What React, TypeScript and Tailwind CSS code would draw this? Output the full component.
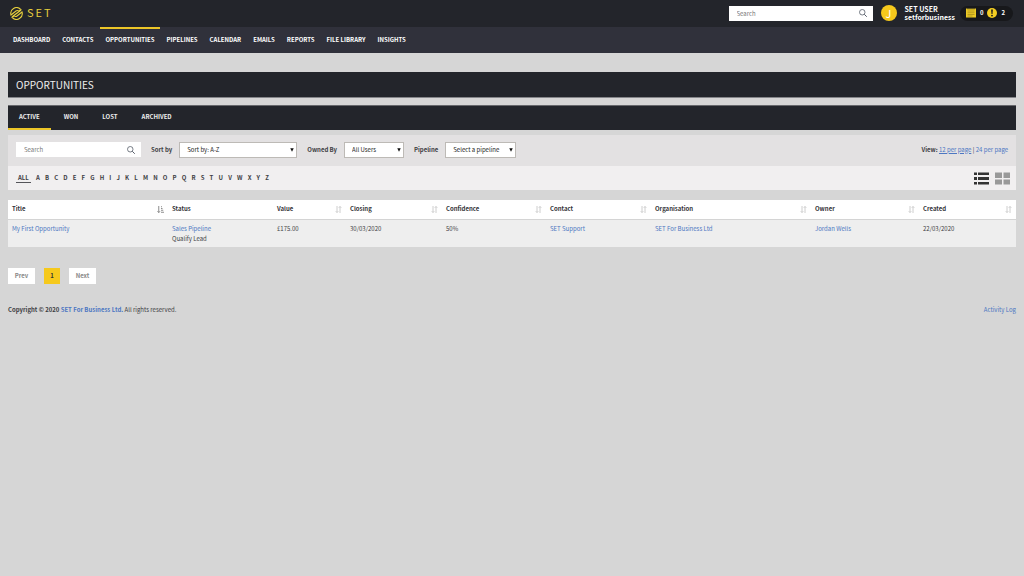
import type { ReactNode } from 'react';
import clsx from 'clsx';

const navItems = [
    'Dashboard',
    'Contacts',
    'Opportunities',
    'Pipelines',
    'Calendar',
    'Emails',
    'Reports',
    'File Library',
    'Insights',
];

const tabs = ['Active', 'Won', 'Lost', 'Archived'];

const letters = 'ABCDEFGHIJKLMNOPQRSTUVWXYZ'.split('');

const columns = [
    { label: 'Title', width: 'w-[160px]', sort: 'active' },
    { label: 'Status', width: 'w-[105px]', sort: 'none' },
    { label: 'Value', width: 'w-[73px]', sort: 'idle' },
    { label: 'Closing', width: 'w-[96px]', sort: 'idle' },
    { label: 'Confidence', width: 'w-[104px]', sort: 'idle' },
    { label: 'Contact', width: 'w-[105px]', sort: 'idle' },
    { label: 'Organisation', width: 'w-[160px]', sort: 'idle' },
    { label: 'Owner', width: 'w-[108px]', sort: 'idle' },
    { label: 'Created', width: 'w-[97px]', sort: 'idle' },
];

function Logo() {
    return (
        <a href="#home" aria-label="SET home" className="flex items-center gap-1 pb-px text-[#e6cf3c]">
            <svg viewBox="0 0 26 26" className="mt-px h-[13px] w-[13px]" fill="none" stroke="currentColor" strokeWidth="2.2">
                <path d="M21 4.500A11.500 11.500 0 0 0 2 16L12 8Q14 6.500 16 7.500Q17.500 8.500 19 7.500L23 5" />
                <path d="M5 21.500A11.500 11.500 0 0 0 24 10L14 18Q12 19.500 10 18.500Q8.500 17.500 7 18.500L3 21" />
                <path d="M4.500 19.500L13.500 12.500M12.500 13.500L21.500 6.500" />
            </svg>
            <span className="text-[11px] leading-[11px] tracking-[2px]">SET</span>
        </a>
    );
}

function SearchIcon() {
    return (
        <svg viewBox="0 0 16 16" className="h-2 w-2" fill="none" stroke="#555d68" strokeWidth="1.600">
            <circle cx="6.500" cy="6.500" r="5.500" />
            <path d="M10.500 10.500L15.500 15.500" strokeWidth="2" />
        </svg>
    );
}

function SearchBox({ label, className }: { label: string; className: string }) {
    return (
        <form role="search" className={clsx('flex items-center bg-white pr-[6px] pl-2', className)}>
            <input
                type="text"
                aria-label={label}
                placeholder="Search"
                className="h-[15px] min-w-0 flex-1 bg-transparent text-[6px] leading-[15px] outline-none placeholder:leading-[15px] placeholder:text-[#777777]"
            />
            <button type="button" aria-label="Search">
                <SearchIcon />
            </button>
        </form>
    );
}

function SelectField({ id, label, value, className }: { id: string; label: string; value: string; className: string }) {
    return (
        <div className="flex items-center gap-[7px]">
            <label htmlFor={id} className="font-bold">{label}</label>
            <div className={clsx('relative', className)}>
                <select
                    id={id}
                    className="block h-4 w-full appearance-none border border-[#bdbab6] bg-white pr-3 pl-[7px] text-[6px] leading-[10px] text-[#222222]"
                >
                    <option>{value}</option>
                </select>
                <svg viewBox="0 0 8 8" className="pointer-events-none absolute top-[6px] right-[3px] h-1 w-1" fill="#111111">
                    <path d="M0.500 0.500H7.500L4 7.500Z" />
                </svg>
            </div>
        </div>
    );
}

function SortIcon({ active }: { active: boolean }) {
    if (active) {
        return (
            <svg viewBox="0 0 14 14" className="h-[7px] w-[7px]" fill="none" stroke="#666666" strokeWidth="1.500">
                <path d="M3.500 0V13M1 10.500L3.500 13L6 10.500M8 1.500H10M8 5H11M8 8.500H12.500M8 12.500H14" />
            </svg>
        );
    }
    return (
        <svg viewBox="0 0 14 14" className="h-[7px] w-[7px]" fill="none" stroke="#bdbdbd" strokeWidth="1.500">
            <path d="M4 0V13M1.500 10.500L4 13L6.500 10.500M10 14V1M7.500 3.500L10 1L12.500 3.500" />
        </svg>
    );
}

function Link({ children }: { children: ReactNode }) {
    return <a href="#record" className="text-[#4d77c2]">{children}</a>;
}

function Header() {
    return (
        <header>
            <div className="flex h-[27px] items-center justify-between bg-[#23252b] pr-[11px] pb-px pl-[10px]">
                <Logo />
                <div className="flex items-center">
                    <SearchBox label="Search everything" className="w-36" />
                    <div className="ml-2 flex h-4 w-4 items-center justify-center rounded-full bg-[#f6c91c] text-[11px] leading-[14px] text-white">
                        J
                    </div>
                    <div className="ml-2 pb-px text-[7px] leading-2 font-bold text-white">
                        <p>SET USER</p>
                        <p>setforbusiness</p>
                    </div>
                    <div className="ml-[5px] flex h-[15px] items-center gap-1 rounded-full bg-[#17181b] pr-2 pl-[6px] text-[6px] leading-[10px] font-bold text-white">
                        <button type="button" aria-label="Tasks">
                            <svg viewBox="0 0 20 20" className="h-[10px] w-[10px]">
                                <path d="M0 1H20V19H0Z" fill="#edca25" />
                                <path d="M3 6H17M3 9.500H17M3 13H17M3 16H13" stroke="#9b8418" strokeWidth="1.300" />
                                <path d="M4 0V3M8 0V3M12 0V3M16 0V3" stroke="#17181b" strokeWidth="1.300" />
                            </svg>
                        </button>
                        <span>0</span>
                        <button type="button" aria-label="Alerts">
                            <svg viewBox="0 0 20 20" className="h-[10px] w-[10px]">
                                <circle cx="10" cy="10" r="10" fill="#f4ce22" />
                                <path d="M8.300 3H11.700L11 12H9Z" fill="#17181b" />
                                <circle cx="10" cy="15.200" r="1.800" fill="#17181b" />
                            </svg>
                        </button>
                        <span>2</span>
                    </div>
                </div>
            </div>
            <nav className="flex h-[26px] gap-[2px] bg-[#30313b] px-2 text-[6px] leading-[10px] font-bold text-white uppercase">
                {navItems.map((item) => (
                    <a
                        key={item}
                        href="#nav"
                        className={clsx(
                            'flex items-center border-t-2 px-[5px] pb-[2px]',
                            item === 'Opportunities' ? 'border-[#edc628]' : 'border-transparent'
                        )}
                    >
                        {item}
                    </a>
                ))}
            </nav>
        </header>
    );
}

function Filters() {
    return (
        <section className="mt-[5px]">
            <div className="flex h-[31px] items-center justify-between bg-[#e3e1e2] px-2 pb-[2px]">
                <div className="flex items-center gap-[10px]">
                    <SearchBox label="Search opportunities" className="w-[125px]" />
                    <SelectField id="sort-by" label="Sort by" value="Sort by: A-Z" className="w-[118px]" />
                    <SelectField id="owned-by" label="Owned By" value="All Users" className="w-[60px]" />
                    <SelectField id="pipeline" label="Pipeline" value="Select a pipeline" className="w-[71px]" />
                </div>
                <p>
                    <strong>View:</strong>{' '}
                    <a href="#12" className="text-[#4d77c2] underline">12 per page</a> |{' '}
                    <a href="#24" className="text-[#4d77c2]">24 per page</a>
                </p>
            </div>
            <div className="flex h-6 items-center justify-between bg-[#f1eff0] pr-[6px] pl-2">
                <div className="flex w-[253px] justify-between font-bold">
                    <a href="#all" className="border-b border-[#55555a] px-[2px] leading-2">ALL</a>
                    {letters.map((letter) => (
                        <a key={letter} href="#letter" className="leading-2">{letter}</a>
                    ))}
                </div>
                <div className="flex gap-[6px]">
                    <button type="button" aria-label="List view">
                        <svg viewBox="0 0 15 13" className="h-[13px] w-[15px]" fill="#333333">
                            <path d="M0 0.500H3V3H0ZM4 0.500H15V3H4ZM0 5H3V8H0ZM4 5H15V8H4ZM0 10H3V12.500H0ZM4 10H15V12.500H4Z" />
                        </svg>
                    </button>
                    <button type="button" aria-label="Grid view">
                        <svg viewBox="0 0 15 13" className="h-[13px] w-[15px]" fill="#999999">
                            <path d="M0 0.500H7V6H0ZM8.500 0.500H15V6H8.500ZM0 7.500H7V12.500H0ZM8.500 7.500H15V12.500H8.500Z" />
                        </svg>
                    </button>
                </div>
            </div>
        </section>
    );
}

function OpportunityTable() {
    return (
        <table className="mt-[10px] w-full table-fixed text-left">
            <thead>
                <tr className="h-[19px] border-b border-[#d4d4d4] bg-white text-[#333338]">
                    {columns.map((col) => (
                        <th key={col.label} scope="col" className={clsx('px-1 font-bold', col.width)}>
                            <div className="flex items-center justify-between">
                                {col.label}
                                {col.sort !== 'none' && <SortIcon active={col.sort === 'active'} />}
                            </div>
                        </th>
                    ))}
                </tr>
            </thead>
            <tbody>
                <tr className="h-7 bg-[#eeeeee] align-top">
                    <td className="px-1 pt-1"><Link>My First Opportunity</Link></td>
                    <td className="px-1 pt-1">
                        <p><Link>Sales Pipeline</Link></p>
                        <p>Qualify Lead</p>
                    </td>
                    <td className="px-1 pt-1">£175.00</td>
                    <td className="px-1 pt-1">30/03/2020</td>
                    <td className="px-1 pt-1">50%</td>
                    <td className="px-1 pt-1"><Link>SET Support</Link></td>
                    <td className="px-1 pt-1"><Link>SET For Business Ltd</Link></td>
                    <td className="px-1 pt-1"><Link>Jordan Wells</Link></td>
                    <td className="px-1 pt-1">22/03/2020</td>
                </tr>
            </tbody>
        </table>
    );
}

export default function App() {
    return (
        <div className="min-h-screen bg-[#d6d6d6] font-['Noto_Sans_CJK_SC',sans-serif] text-[6px] leading-[10px] text-[#3e3e44]">
            <Header />
            <main className="px-2 pt-[19px]">
                <h1 className="flex h-[26px] items-center border-b border-[#85868a] bg-[#23252b] px-2 text-[10px] leading-[14px] text-[#eeeeee]">
                    OPPORTUNITIES
                </h1>

                <div role="tablist" className="mt-[7px] flex h-[25px] gap-[2px] border-t border-[#66676b] bg-[#23252b] font-bold text-[#eeeeee] uppercase">
                    {tabs.map((tab) => (
                        <button
                            key={tab}
                            type="button"
                            role="tab"
                            aria-selected={tab === 'Active'}
                            className={clsx(
                                'border-b-2 px-[11px] uppercase',
                                tab === 'Active' ? 'border-[#edc628]' : 'border-transparent'
                            )}
                        >
                            {tab}
                        </button>
                    ))}
                </div>

                <Filters />
                <OpportunityTable />

                <nav aria-label="Pagination" className="mt-[21px] flex gap-[9px] font-bold">
                    <button type="button" className="h-4 w-[27px] bg-white text-[#888888]">Prev</button>
                    <button type="button" className="h-4 w-4 bg-[#f6c91c] text-[#333333]">1</button>
                    <button type="button" className="h-4 w-[27px] bg-white text-[#888888]">Next</button>
                </nav>
            </main>
            <footer className="mt-[21px] flex justify-between px-2">
                <p>
                    <strong>Copyright © 2020 <Link>SET For Business Ltd.</Link></strong> All rights reserved.
                </p>
                <Link>Activity Log</Link>
            </footer>
        </div>
    );
}
